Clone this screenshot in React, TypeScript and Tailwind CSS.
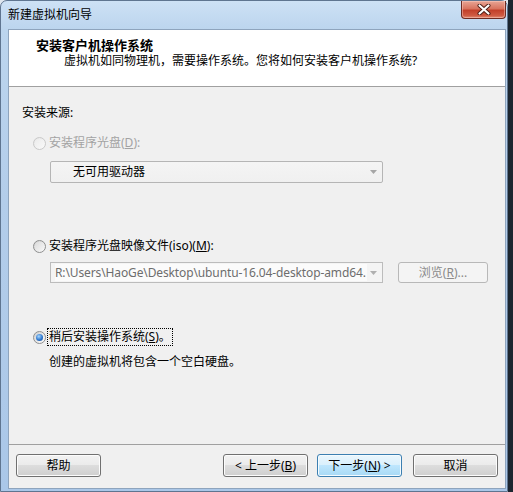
import React from "react";

const Radio = ({ state }: { state: "disabled" | "off" | "on" }) => {
  if (state === "disabled") {
    return (
      <span className="w-[13px] h-[13px] rounded-full border border-[#c9c9c9] bg-[linear-gradient(135deg,#e6e6e6,#fbfbfb)] flex items-center justify-center shrink-0">
        <span className="w-[9px] h-[9px] rounded-full bg-[linear-gradient(135deg,#ececec,#f8f8f8)]" />
      </span>
    );
  }
  return (
    <span className="w-[13px] h-[13px] rounded-full border border-[#8e8f8f] bg-[linear-gradient(135deg,#d0d0d0,#fdfdfd)] flex items-center justify-center shrink-0">
      {state === "on" ? (
        <span className="w-[7px] h-[7px] rounded-full bg-[radial-gradient(circle_at_40%_35%,#a8d8ff,#2f78cf_55%,#16488c)]" />
      ) : (
        <span className="w-[9px] h-[9px] rounded-full bg-[linear-gradient(135deg,#dcdcdc,#f6f6f6)]" />
      )}
    </span>
  );
};

const Arrow = ({ color }: { color: string }) => (
  <svg width="7" height="4" viewBox="0 0 7 4" className="shrink-0">
    <path d="M0 0 H7 L3.5 4 Z" fill={color} />
  </svg>
);

const Btn = ({ children, def }: { children: React.ReactNode; def?: boolean }) => (
  <div
    className={
      def
        ? "w-[85px] h-[23px] rounded-[3px] border border-[#3c7fb1] bg-[linear-gradient(#eaf6fd_0%,#d9f0fc_50%,#bee6fd_50%,#a7d9f5_100%)] shadow-[inset_0_0_0_1px_#f4fbff] flex items-center justify-center text-[12px] leading-[16px] text-black"
        : "w-[85px] h-[23px] rounded-[3px] border border-[#707070] bg-[linear-gradient(#f2f2f2_0%,#ebebeb_50%,#dddddd_50%,#cfcfcf_100%)] shadow-[inset_0_0_0_1px_#fcfcfc] flex items-center justify-center text-[12px] leading-[16px] text-black"
    }
  >
    {children}
  </div>
);

export default function App() {
  return (
    <div className="w-[513px] h-[492px] flex bg-[#dfe6ee] font-['Noto_Sans','Noto_Sans_CJK_SC',sans-serif] overflow-hidden">
      <div className="w-[508px] h-[492px] rounded-t-[7px] border border-[#5f7590] bg-[linear-gradient(#cde1f5,#bcd5ee_28px,#b3cdea_200px,#aac7e8)] flex flex-col">
        {/* title bar */}
        <div className="h-[28px] flex items-start justify-between">
          <div className="pl-[7px] pt-[6px] text-[12px] leading-[16px] text-black">新建虚拟机向导</div>
          <div className="mr-[1px] w-[45px] h-[18px] rounded-b-[4px] border border-t-0 border-[#6e2b22] bg-[linear-gradient(#e8a595_0%,#d8745f_45%,#c2402a_55%,#cf5a42_85%,#e08c74_100%)] shadow-[inset_0_0_0_1px_rgba(255,210,200,0.45)] flex items-center justify-center">
            <svg width="14" height="11" viewBox="0 0 14 11">
              <path d="M2.5 1.5 L11.5 9.5 M11.5 1.5 L2.5 9.5" stroke="#4a1a12" strokeWidth="4" strokeLinecap="round" />
              <path d="M2.5 1.5 L11.5 9.5 M11.5 1.5 L2.5 9.5" stroke="#ffffff" strokeWidth="2.2" strokeLinecap="round" />
            </svg>
          </div>
        </div>

        {/* client */}
        <div className="ml-[7px] mr-[1px] h-[460px] border border-[#8ea4bd] bg-[#f0f0f0] flex flex-col">
          {/* header */}
          <div className="h-[57px] bg-white border-b border-[#a0a0a0] pl-[27px] pt-[7px] shrink-0">
            <div className="text-[13px] leading-[16px] font-bold text-black">安装客户机操作系统</div>
            <div className="ml-[28px] text-[12px] leading-[16px] text-black">
              虚拟机如同物理机，需要操作系统。您将如何安装客户机操作系统?
            </div>
          </div>

          {/* body */}
          <div className="flex-1 flex flex-col text-[12px] leading-[16px]">
            <div className="mt-[18px] ml-[13px] text-black">安装来源:</div>

            <div className="mt-[14px] ml-[24px] h-[16px] flex items-center">
              <Radio state="disabled" />
              <span className="ml-[3px] text-[#a3a3a3]">
                安装程序光盘(<span className="underline">D</span>):
              </span>
            </div>

            <div className="mt-[10px] ml-[41px] w-[333px] h-[22px] rounded-[2px] border border-[#b5b5b5] bg-[linear-gradient(#f4f4f4,#f0f0f0)] flex items-center">
              <span className="ml-[22px] flex-1 text-black">无可用驱动器</span>
              <span className="mr-[5px]">
                <Arrow color="#a6a6a6" />
              </span>
            </div>

            <div className="mt-[55px] ml-[24px] h-[16px] flex items-center">
              <Radio state="off" />
              <span className="ml-[3px] text-black">
                安装程序光盘映像文件(iso)(<span className="underline">M</span>):
              </span>
            </div>

            <div className="mt-[8px] ml-[41px] flex items-center">
              <div className="w-[333px] h-[21px] border border-[#bcbcbc] bg-[#f4f4f4] flex items-center">
                <div className="ml-[4px] w-[312px] h-[17px] bg-[#fbfbfb] overflow-hidden whitespace-nowrap text-[#6d6d6d] leading-[17px] tracking-[-0.12px]">
                  R:\Users\HaoGe\Desktop\ubuntu-16.04-desktop-amd64.
                </div>
                <span className="ml-[3px]">
                  <Arrow color="#b0b0b0" />
                </span>
              </div>
              <div className="ml-[15px] w-[90px] h-[21px] rounded-[3px] border border-[#b8b8b8] bg-[#f4f4f4] flex items-center justify-center text-[#8a8a8a]">
                浏览(<span className="underline">R</span>)...
              </div>
            </div>

            <div className="mt-[46px] ml-[24px] h-[16px] flex items-center">
              <Radio state="on" />
              <span className="ml-[2px] px-[1px] outline outline-1 outline-dotted outline-black text-black">
                稍后安装操作系统(<span className="underline">S</span>)。
              </span>
            </div>

            <div className="mt-[9px] ml-[40px] text-black">创建的虚拟机将包含一个空白硬盘。</div>
          </div>

          {/* footer */}
          <div className="border-t border-[#a0a0a0] pt-[9px] pb-[11px] flex items-center shrink-0">
            <div className="ml-[7px]">
              <Btn>帮助</Btn>
            </div>
            <div className="flex-1" />
            <Btn>
              &lt; 上一步(<span className="underline">B</span>)
            </Btn>
            <div className="ml-[9px]">
              <Btn def>
                下一步(<span className="underline">N</span>) &gt;
              </Btn>
            </div>
            <div className="ml-[11px] mr-[7px]">
              <Btn>取消</Btn>
            </div>
          </div>
        </div>
      </div>
      <div className="flex-1 h-[492px] bg-[#1c2630]" />
    </div>
  );
}
